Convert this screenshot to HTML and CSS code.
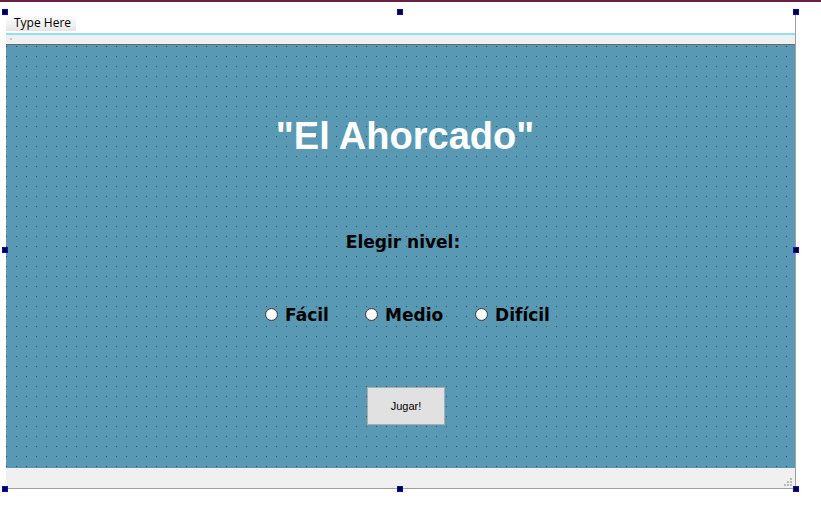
FILE: index.html
```html
<!DOCTYPE html>
<html lang="es">
<head>
<meta charset="utf-8">
<title>El Ahorcado</title>
<link rel="stylesheet" href="styles.css">
</head>
<body>
<div class="topline"></div>
<div class="stage">
  <div class="form">
    <div class="menustrip"><div class="menuitem">Type Here</div></div>
    <div class="toolstrip"><span class="grip"></span></div>
    <div class="client">
      <h1 class="title">"El Ahorcado"</h1>
      <div class="prompt">Elegir nivel:</div>
      <div class="levels">
        <label class="opt opt-facil"><span class="radio"></span>Fácil</label>
        <label class="opt opt-medio"><span class="radio"></span>Medio</label>
        <label class="opt opt-dificil"><span class="radio"></span>Difícil</label>
      </div>
      <button class="play" type="button">Jugar!</button>
    </div>
    <div class="status">
      <svg class="sizegrip" width="8" height="8" viewBox="0 0 8 8">
        <rect x="6" y="0" width="2" height="2" fill="#b9b9b9"/>
        <rect x="3" y="3" width="2" height="2" fill="#b9b9b9"/>
        <rect x="6" y="3" width="2" height="2" fill="#b9b9b9"/>
        <rect x="0" y="6" width="2" height="2" fill="#b9b9b9"/>
        <rect x="3" y="6" width="2" height="2" fill="#b9b9b9"/>
        <rect x="6" y="6" width="2" height="2" fill="#b9b9b9"/>
      </svg>
    </div>
  </div>
  <span class="handle h-tl"></span>
  <span class="handle h-tm"></span>
  <span class="handle h-tr"></span>
  <span class="handle h-ml"></span>
  <span class="handle h-mr"></span>
  <span class="handle h-bl"></span>
  <span class="handle h-bm"></span>
  <span class="handle h-br"></span>
</div>
</body>
</html>
```

FILE: styles.css
```css
html, body {
  margin: 0;
  padding: 0;
  background: #ffffff;
}

body {
  width: 821px;
  height: 515px;
  overflow: hidden;
  font-family: "Liberation Sans", Arial, sans-serif;
}

.topline {
  height: 2px;
  background: #6a1e42;
}

.stage {
  position: relative;
  padding: 11px 0 0 6px;
}

.form {
  width: 789px;
  border-right: 1px solid #a0a0a0;
  border-bottom: 1px solid #a0a0a0;
  display: flex;
  flex-direction: column;
}

.menustrip {
  height: 19px;
  padding-top: 1px;
  background: #ffffff;
}

.menuitem {
  width: 62px;
  height: 17px;
  padding-left: 8px;
  line-height: 18px;
  font-family: "Open Sans", "Noto Sans", sans-serif;
  font-size: 12px;
  color: #000000;
  background: linear-gradient(#ffffff, #f3f3f3 55%, #e4e4e4);
}

.toolstrip {
  height: 9px;
  border-top: 2px solid #94def6;
  border-bottom: 1px solid #6a6a6a;
  background: #f0f0f0;
  position: relative;
}

.grip {
  position: absolute;
  left: 4px;
  top: 3px;
  width: 2px;
  height: 2px;
  background: #c4c4c4;
}

.client {
  height: 423px;
  padding-left: 9px;
  box-sizing: border-box;
  padding-top: 69px;
  display: flex;
  flex-direction: column;
  align-items: center;
  background:
    linear-gradient(to bottom, transparent 1px, #5a99b3 1px) 0 1px / 10px 10px,
    linear-gradient(to right, #2e4a58 1px, #5a99b3 1px) 0 1px / 10px 10px;
}

.title {
  margin: 0;
  font-family: "Liberation Sans", Arial, sans-serif;
  font-weight: bold;
  font-size: 38px;
  line-height: 44px;
  color: #ffffff;
}

.prompt {
  margin-top: 74px;
  margin-left: -4px;
  font-family: "DejaVu Sans", Verdana, sans-serif;
  font-weight: bold;
  font-size: 17px;
  line-height: 20px;
  color: #000000;
}

.levels {
  margin-top: 53px;
  margin-left: 5px;
  display: flex;
  font-family: "DejaVu Sans", Verdana, sans-serif;
  font-weight: bold;
  font-size: 17px;
  line-height: 20px;
  color: #000000;
}

.opt {
  display: flex;
  align-items: center;
}

.opt-facil { width: 100px; }
.opt-medio { width: 110px; }

.radio {
  width: 11px;
  height: 11px;
  margin-right: 7px;
  margin-top: -2px;
  border: 1px solid #3a3a3a;
  border-radius: 50%;
  background: #ffffff;
  box-shadow: inset 0 0 0 1px #e6e6e6;
  flex: none;
}

.play {
  margin-top: 62px;
  margin-left: 2px;
  width: 78px;
  height: 38px;
  padding: 0;
  border: 1px solid #adadad;
  background: #e1e1e1;
  font-family: "Liberation Sans", Arial, sans-serif;
  font-size: 11px;
  color: #000000;
}

.status {
  height: 20px;
  background: #f0f0f0;
  display: flex;
  justify-content: flex-end;
  align-items: flex-end;
}

.sizegrip {
  display: block;
  margin: 0 3px 2px 0;
}

.handle {
  position: absolute;
  width: 4px;
  height: 4px;
  background: #000000;
  border: 1px solid #0000ff;
}

.h-tl { left: 2px; top: 7px; }
.h-tm { left: 397px; top: 7px; }
.h-tr { left: 793px; top: 7px; }
.h-ml { left: 2px; top: 245px; }
.h-mr { left: 793px; top: 245px; }
.h-bl { left: 2px; top: 484px; }
.h-bm { left: 397px; top: 484px; }
.h-br { left: 793px; top: 484px; }
```
